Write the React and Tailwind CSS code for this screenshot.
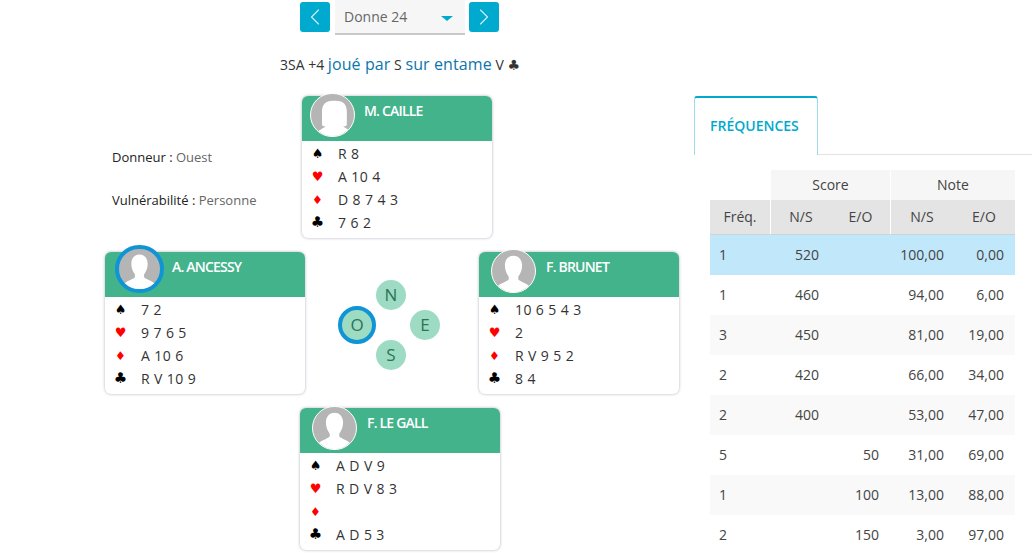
import { ChevronLeft, ChevronRight } from 'lucide-react';

const HANDS = {
  north: { name: 'M. CAILLE', cards: ['R 8', 'A 10 4', 'D 8 7 4 3', '7 6 2'], female: true, avatar: 'left-[8px] -top-[3px]' },
  west: { name: 'A. ANCESSY', cards: ['7 2', '9 7 6 5', 'A 10 6', 'R V 10 9'], active: true, avatar: 'left-[10px] -top-[7px]' },
  east: { name: 'F. BRUNET', cards: ['10 6 5 4 3', '2', 'R V 9 5 2', '8 4'], avatar: 'left-[12px] -top-[3px]' },
  south: { name: 'F. LE GALL', cards: ['A D V 9', 'R D V 8 3', '', 'A D 5 3'], avatar: 'left-[12px] -top-[2px]' },
};

const SUITS = [
  { glyph: '♠', color: 'text-black text-[13px]' },
  { glyph: '♥', color: 'text-[#ff0000] text-[13px]' },
  { glyph: '♦', color: 'text-[#ff0000] text-[12px]' },
  { glyph: '♣', color: 'text-black text-[15px]' },
];

const ROWS = [
  { freq: '1', ns: '520', eo: '', noteNs: '100,00', noteEo: '0,00', bg: 'bg-[#c1e7fb]' },
  { freq: '1', ns: '460', eo: '', noteNs: '94,00', noteEo: '6,00', bg: 'bg-white' },
  { freq: '3', ns: '450', eo: '', noteNs: '81,00', noteEo: '19,00', bg: 'bg-[#f9f9f9]' },
  { freq: '2', ns: '420', eo: '', noteNs: '66,00', noteEo: '34,00', bg: 'bg-white' },
  { freq: '2', ns: '400', eo: '', noteNs: '53,00', noteEo: '47,00', bg: 'bg-[#f9f9f9]' },
  { freq: '5', ns: '', eo: '50', noteNs: '31,00', noteEo: '69,00', bg: 'bg-white' },
  { freq: '1', ns: '', eo: '100', noteNs: '13,00', noteEo: '88,00', bg: 'bg-[#f9f9f9]' },
  { freq: '2', ns: '', eo: '150', noteNs: '3,00', noteEo: '97,00', bg: 'bg-white' },
];

function Avatar({ female, active, position }) {
  return (
    <div className={`absolute overflow-hidden rounded-full bg-[#b5b5b5] ${active ? 'h-[48px] w-[49px] border-[4px] border-[#0f94d6]' : 'h-[44px] w-[45px] border-[1.5px] border-white'} ${position}`}>
      <svg viewBox="0 0 44 44" className="h-full w-full blur-[0.4px]" fill="#ffffff">
        {female ? (
          <path d="M22 7c-7 0-11 4-11 11v14c0 1 1 2 3 2h1c-3 2-7 3-9 7v3h36v-3c-2-4-6-5-9-7h1c2 0 3-1 3-2V18c0-7-4-11-11-11z" />
        ) : (
          <path d="M22 6c-6 0-9 5-9 10 0 4 1 8 4 12v3c-3 3-10 4-12 8v5h34v-5c-2-4-9-5-12-8v-3c3-4 4-8 4-12 0-5-3-10-9-10z" />
        )}
      </svg>
    </div>
  );
}

function Hand({ hand, width = 'w-[200px]', nameLeft = 'pl-[67px]' }) {
  return (
    <div className={`relative ${width} h-[142px] shrink-0 rounded-md bg-white shadow-[0_0_3px_rgba(70,70,110,0.45)]`}>
      <div className={`h-[45px] rounded-t-md bg-[#43b38c] ${nameLeft} pt-[5px] text-[14px] leading-[20px] font-semibold tracking-[-0.8px] text-white`}>
        {hand.name}
      </div>
      <Avatar female={hand.female} active={hand.active} position={hand.avatar} />
      <div className="pt-[1px] pl-[4px]">
        {hand.cards.map((c, i) => (
          <div key={i} className="flex h-[23px] items-center text-[14px] text-[#333333]">
            <span className={`w-[23px] text-center leading-none font-['DejaVu_Sans'] ${SUITS[i].color}`}>{SUITS[i].glyph}</span>
            <span className="ml-[9px] tracking-[0.4px]">{c}</span>
          </div>
        ))}
      </div>
    </div>
  );
}

function Seat({ label, active, className }) {
  return (
    <div className={`absolute flex items-center justify-center rounded-full bg-[#9ddbc3] text-[17px] text-[#2a7459] ${active ? 'h-[38px] w-[38px] border-[4px] border-[#0f94d6]' : 'h-[30px] w-[30px]'} ${className}`}>
      {label}
    </div>
  );
}

export default function App() {
  return (
    <div className="flex h-[558px] w-[1032px] overflow-hidden bg-white font-['Open_Sans',sans-serif] text-[#333333]">
      <div className="w-[694px] shrink-0">
        {/* Donne picker */}
        <div className="flex h-[35px] pl-[300px]">
          <button className="mt-[2px] flex h-[30px] w-[30px] items-center justify-center rounded-[3px] bg-[#00aacf] text-[#cdeef6]">
            <ChevronLeft size={28} strokeWidth={1} />
          </button>
          <div className="ml-[5px] flex h-[35px] w-[130px] items-center justify-between border-b-2 border-[#c9c9c9] bg-[#f6f6f6] pl-[9px] pr-[12px] text-[14px] text-[#666666]">
            <span>Donne 24</span>
            <span className="mt-[3px] h-0 w-0 border-x-[6px] border-t-[5px] border-x-transparent border-t-[#00aacf]" />
          </div>
          <button className="ml-[4px] mt-[2px] flex h-[30px] w-[30px] items-center justify-center rounded-[3px] bg-[#00aacf] text-[#cdeef6]">
            <ChevronRight size={28} strokeWidth={1} />
          </button>
        </div>

        {/* Contract */}
        <div className="mt-[18px] pl-[280px] text-[14px] leading-[22px]">
          3SA +4 <span className="text-[16px] font-medium tracking-[0.1px] text-[#0b75ad]">joué par</span> S <span className="text-[16px] font-medium tracking-[0.1px] text-[#0b75ad]">sur entame</span> V <span className="font-['DejaVu_Sans'] text-[14px]">♣</span>
        </div>

        {/* North */}
        <div className="mt-[20px] flex">
          <div className="w-[302px] shrink-0 pl-[112px] pt-[52px] text-[13px] leading-[18px]">
            <div><span className="text-[#222222]">Donneur :</span> <span className="text-[#666666]">Ouest</span></div>
            <div className="mt-[25px]"><span className="text-[#222222]">Vulnérabilité :</span> <span className="text-[#666666]">Personne</span></div>
          </div>
          <Hand hand={HANDS.north} width="w-[190px]" nameLeft="pl-[62px]" />
        </div>

        {/* West / bidding seats / East */}
        <div className="mt-[14px] flex pl-[105px]">
          <Hand hand={HANDS.west} />
          <div className="relative w-[174px] shrink-0">
            <Seat label="N" className="left-[71px] top-[28px]" />
            <Seat label="E" className="left-[105px] top-[58px]" />
            <Seat label="O" active className="left-[33px] top-[54px]" />
            <Seat label="S" className="left-[71px] top-[88px]" />
          </div>
          <Hand hand={HANDS.east} />
        </div>

        {/* South */}
        <div className="mt-[14px] pl-[300px]">
          <Hand hand={HANDS.south} />
        </div>
      </div>

      {/* Tabs and table */}
      <div className="min-w-0 flex-1 pt-[96px]">
        <div className="flex h-[59px] border-b border-[#e3e3e3]">
          <div className="h-[59px] w-[124px] rounded-t-[3px] border-x border-t-[2px] border-[#9fdcea] border-t-[#00aacf] bg-white pt-[16px] pl-[15px] text-[14px] leading-[24px] font-semibold text-[#00aacf]">
            FRÉQUENCES
          </div>
        </div>
        <div className="ml-[16px] mt-[15px] w-[305px] text-[14px] text-[#444444]">
          <div className="grid h-[30px] grid-cols-[61px_120px_124px]">
            <div />
            <div className="flex items-center justify-center border-r border-white bg-[#f6f6f6] pb-[1px]">Score</div>
            <div className="flex items-center justify-center bg-[#f6f6f6] pb-[1px]">Note</div>
          </div>
          <div className="grid h-[35px] grid-cols-[61px_60px_60px_62px_62px] border-b border-[#cfd3d6] bg-[#e4e4e4] text-center">
            <div className="flex items-center justify-center border-r border-white pb-[1px]">Fréq.</div>
            <div className="flex items-center justify-center pb-[1px]">N/S</div>
            <div className="flex items-center justify-center border-r border-white pb-[1px]">E/O</div>
            <div className="flex items-center justify-center pb-[1px]">N/S</div>
            <div className="flex items-center justify-center pb-[1px]">E/O</div>
          </div>
          {ROWS.map((r, i) => (
            <div key={i} className={`grid h-[40px] grid-cols-[61px_60px_60px_62px_62px] items-center pb-[2px] text-right ${r.bg}`}>
              <div className="pl-[9px] text-left">{r.freq}</div>
              <div className="pr-[12px]">{r.ns}</div>
              <div className="pr-[12px]">{r.eo}</div>
              <div className="pr-[9px]">{r.noteNs}</div>
              <div className="pr-[11px]">{r.noteEo}</div>
            </div>
          ))}
        </div>
      </div>
    </div>
  );
}
